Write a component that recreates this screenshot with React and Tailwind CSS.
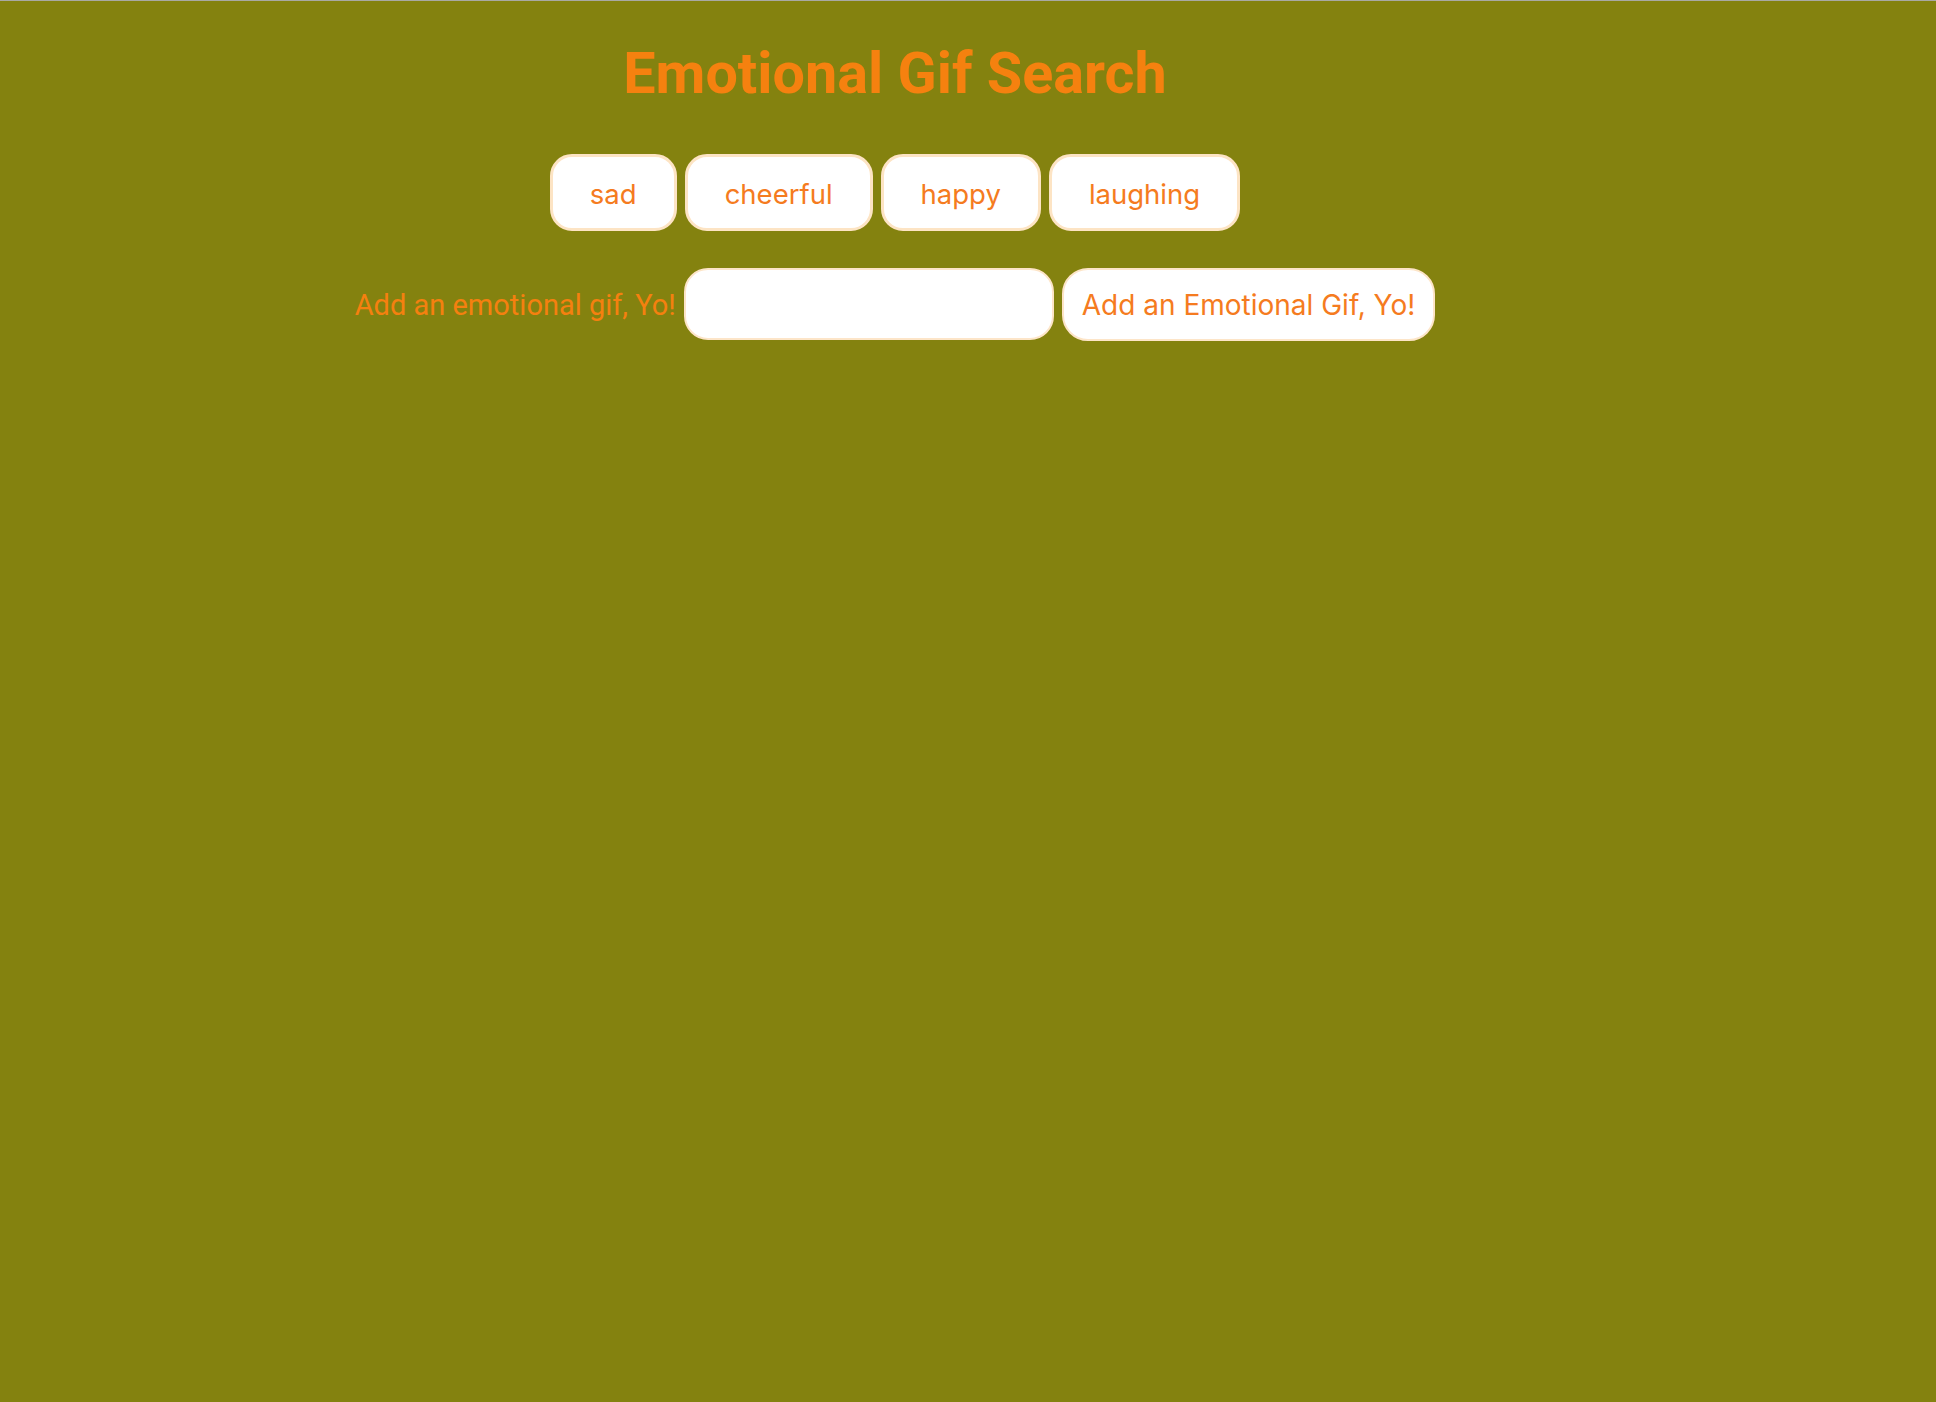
const emotions = ['sad', 'cheerful', 'happy', 'laughing'];

export default function App() {
  return (
    <div className="min-h-screen w-full bg-[#84820f] border-t border-[#a9a9a4] font-['Roboto',sans-serif]">
      <div className="w-[1790px] flex flex-col items-center">
        <h1 className="mt-[44px] text-[57.5px] leading-none font-bold text-[#f5810f]">Emotional Gif Search</h1>

        {/* emotion buttons */}
        <div className="mt-[51px] flex gap-[8px]">
          {emotions.map((e) => (
            <button
              key={e}
              className="h-[77px] px-[37px] pt-[5px] bg-white border-[3px] border-[#fde4c4] rounded-[22px] text-[27.5px] text-[#f57b20] font-['Inter',sans-serif]"
            >
              {e}
            </button>
          ))}
        </div>

        {/* add form */}
        <form className="mt-[37px] flex items-center gap-[8px]" onSubmit={(ev) => ev.preventDefault()}>
          <label className="pt-[4px] text-[29px] text-[#f5800f]">Add an emotional gif, Yo!</label>
          <input
            type="text"
            className="w-[370px] h-[72px] bg-white border-2 border-[#fde5c8] rounded-[24px] outline-none"
          />
          <button
            type="submit"
            className="h-[73px] px-[18px] pt-[2px] bg-white border-2 border-[#fde5c8] rounded-[26px] text-[28px] text-[#f57b20] font-['Inter',sans-serif]"
          >
            Add an Emotional Gif, Yo!
          </button>
        </form>
      </div>
    </div>
  );
}
